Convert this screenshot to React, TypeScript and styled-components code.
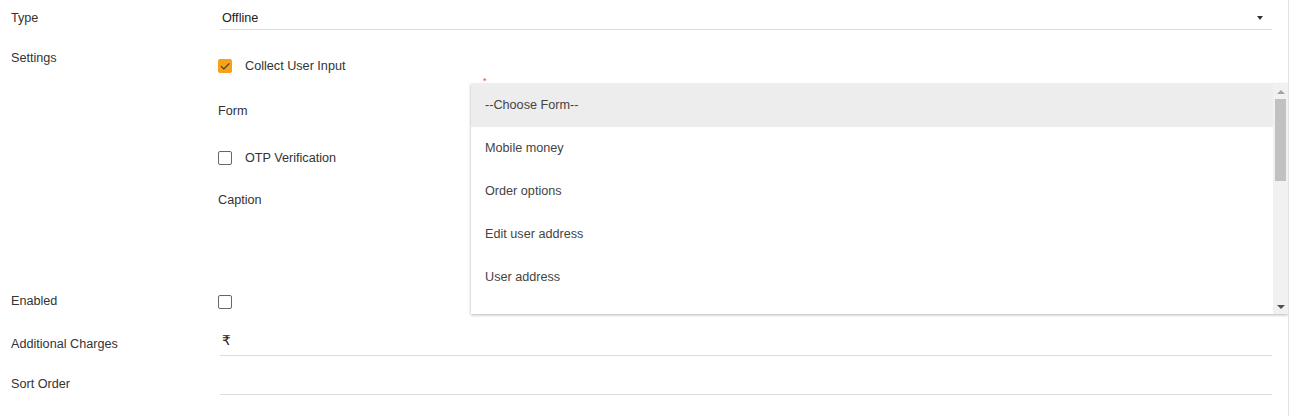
import React from "react";
import styled, { createGlobalStyle } from "styled-components";

const Global = createGlobalStyle`
  html, body { margin: 0; padding: 0; background: #fff; }
  body { font-family: "Liberation Sans", Arial, sans-serif; font-size: 12.65px; color: #333; }
`;

const Page = styled.div`
  position: relative;
  width: 1288px;
  height: 416px;
  border-right: 1px solid #e2e2e2;
  overflow: hidden;
`;

const Row = styled.div<{ $h: number }>`
  display: grid;
  grid-template-columns: 218px 1054px;
  height: ${(p) => p.$h}px;
`;

const Label = styled.div<{ $top: number }>`
  padding: ${(p) => p.$top}px 0 0 11px;
  line-height: 18px;
  color: #333;
`;

const Field = styled.div<{ $top: number; $bottom: number }>`
  margin-left: 2px;
  width: 1052px;
  box-sizing: border-box;
  padding: ${(p) => p.$top}px 2px ${(p) => p.$bottom}px 2px;
  line-height: 18px;
  border-bottom: 1px solid #dcdcdc;
  display: flex;
  align-items: center;
  justify-content: space-between;
  color: #222;
  align-self: start;
`;

const Rupee = styled.span`
  font-family: "DejaVu Sans", "Liberation Sans", sans-serif;
  font-size: 13.5px;
  color: #222;
`;

const Caret = styled.span`
  width: 0;
  height: 0;
  margin-right: 7px;
  margin-top: -1px;
  border-left: 3.5px solid transparent;
  border-right: 3.5px solid transparent;
  border-top: 4px solid #333;
`;

const Column = styled.div`
  display: flex;
  flex-direction: column;
`;

const Line = styled.div<{ $h: number }>`
  position: relative;
  box-sizing: border-box;
  height: ${(p) => p.$h}px;
  padding-top: 2px;
  display: flex;
  align-items: center;
  gap: 13px;
  line-height: 18px;
`;

const Box = styled.span<{ $checked?: boolean }>`
  width: 14px;
  height: 14px;
  box-sizing: border-box;
  border-radius: 2px;
  border: 1px solid ${(p) => (p.$checked ? "#f7a21b" : "#666")};
  background: ${(p) => (p.$checked ? "#f7a21b" : "#fff")};
  display: inline-flex;
  align-items: center;
  justify-content: center;
  flex-shrink: 0;
`;

const Required = styled.span`
  position: absolute;
  left: 265px;
  top: -13px;
  color: #f24822;
  font-size: 9px;
  line-height: 9px;
`;

const Dropdown = styled.div`
  position: absolute;
  left: 471px;
  top: 84px;
  width: 817px;
  height: 230px;
  background: #fff;
  box-shadow: 0 1px 3px rgba(0, 0, 0, 0.28), 0 0 1px rgba(0, 0, 0, 0.12);
  display: flex;
  overflow: hidden;
`;

const Options = styled.div`
  flex: 1;
  display: flex;
  flex-direction: column;
`;

const Option = styled.div<{ $active?: boolean }>`
  height: 43px;
  box-sizing: border-box;
  padding: 0 0 2px 14px;
  flex-shrink: 0;
  display: flex;
  align-items: center;
  color: #444;
  background: ${(p) => (p.$active ? "#ededed" : "#fff")};
`;

const Track = styled.div`
  width: 15px;
  background: #f1f1f1;
  display: flex;
  flex-direction: column;
  align-items: center;
`;

const Arrow = styled.div<{ $up?: boolean }>`
  height: 15px;
  width: 15px;
  display: flex;
  align-items: center;
  justify-content: center;
  &::after {
    content: "";
    border-left: 4px solid transparent;
    border-right: 4px solid transparent;
    ${(p) => (p.$up ? "border-bottom: 4px solid #a3a3a3;" : "border-top: 4px solid #505050;")}
  }
`;

const Thumb = styled.div`
  width: 11px;
  height: 82px;
  background: #c1c1c1;
`;

const TrackFill = styled.div`
  flex: 1;
`;

const Check = () => (
  <svg width="12" height="12" viewBox="0 0 12 12">
    <path d="M2 6.2 L4.8 9 L10.4 3.4" fill="none" stroke="#3a3a3a" strokeWidth="1.1" />
  </svg>
);

const options = [
  "--Choose Form--",
  "Mobile money",
  "Order options",
  "Edit user address",
  "User address",
];

export default function App() {
  return (
    <>
      <Global />
      <Page>
        <Row $h={40}>
          <Label $top={9}>Type</Label>
          <Field $top={9} $bottom={2}>
            <span>Offline</span>
            <Caret />
          </Field>
        </Row>
        <Row $h={250}>
          <Label $top={9}>Settings</Label>
          <Column>
            <Line $h={50}>
              <Box $checked>
                <Check />
              </Box>
              <span>Collect User Input</span>
            </Line>
            <Line $h={40}>
              <span>Form</span>
              <Required>*</Required>
            </Line>
            <Line $h={54}>
              <Box />
              <span>OTP Verification</span>
            </Line>
            <Line $h={30}>
              <span>Caption</span>
            </Line>
          </Column>
        </Row>
        <Row $h={32}>
          <Label $top={2}>Enabled</Label>
          <Line $h={21}>
            <Box />
          </Line>
        </Row>
        <Row $h={42}>
          <Label $top={13}>Additional Charges</Label>
          <Field $top={9} $bottom={6}>
            <Rupee>₹</Rupee>
          </Field>
        </Row>
        <Row $h={40}>
          <Label $top={11}>Sort Order</Label>
          <Field $top={8} $bottom={4}>
            <span>&nbsp;</span>
          </Field>
        </Row>
        <Dropdown>
          <Options>
            {options.map((o, i) => (
              <Option key={o} $active={i === 0}>
                {o}
              </Option>
            ))}
          </Options>
          <Track>
            <Arrow $up />
            <Thumb />
            <TrackFill />
            <Arrow />
          </Track>
        </Dropdown>
      </Page>
    </>
  );
}
